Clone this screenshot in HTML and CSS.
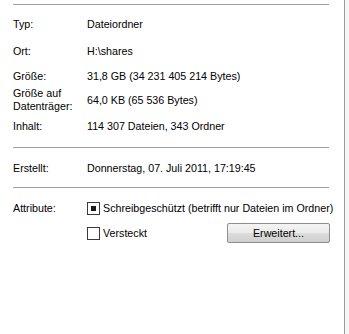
FILE: index.html
```html
<!DOCTYPE html>
<html lang="de">
<head>
<meta charset="utf-8">
<link rel="stylesheet" href="styles.css">
</head>
<body>
<div class="panel">
  <div class="sep sep-top"></div>
  <div class="row r-typ"><div class="label">Typ:</div><div class="value">Dateiordner</div></div>
  <div class="row r-ort"><div class="label">Ort:</div><div class="value">H:\shares</div></div>
  <div class="row r-size"><div class="label">Größe:</div><div class="value">31,8 GB (34 231 405 214 Bytes)</div></div>
  <div class="row r-disk"><div class="label">Größe auf<br>Datenträger:</div><div class="value mid">64,0 KB (65 536 Bytes)</div></div>
  <div class="row r-inh"><div class="label">Inhalt:</div><div class="value">114 307 Dateien, 343 Ordner</div></div>
  <div class="sep sep-2"></div>
  <div class="row r-erst"><div class="label">Erstellt:</div><div class="value">Donnerstag, 07. Juli 2011, 17:19:45</div></div>
  <div class="sep sep-3"></div>
  <div class="row r-attr">
    <div class="label">Attribute:</div>
    <div class="value check"><span class="box indet"></span><span>Schreibgeschützt (betrifft nur Dateien im Ordner)</span></div>
  </div>
  <div class="row r-hid">
    <div class="label"></div>
    <div class="value check grow"><span class="box"></span><span>Versteckt</span><button class="btn">Erweitert...</button></div>
  </div>
</div>
</body>
</html>
```
FILE: styles.css
```css
html, body {
  margin: 0;
  padding: 0;
}
body {
  background: #f6f6f6;
  font-family: "Liberation Sans", Arial, sans-serif;
  font-size: 10.7px;
  line-height: 13px;
  color: #000;
  width: 349px;
  height: 334px;
  overflow: hidden;
}
.panel {
  width: 345px;
  height: 334px;
  box-sizing: border-box;
  background: #fff;
  border-right: 1px solid #9a9a9a;
  padding: 4px 14px 0 13px;
  display: flex;
  flex-direction: column;
}
.sep {
  height: 1px;
  background: #a0a0a0;
  flex: none;
  margin-right: 1px;
}
.row {
  display: flex;
  align-items: flex-start;
}
.label {
  width: 74px;
  flex: none;
}
.value {
  flex: 1;
  white-space: nowrap;
}
.value.mid {
  align-self: center;
}
.r-typ { margin-top: 13px; }
.r-ort { margin-top: 14px; }
.r-size { margin-top: 12px; }
.r-disk { margin-top: 4px; }
.r-inh { margin-top: 7px; }
.sep-2 { margin-top: 14px; }
.r-erst { margin-top: 14px; }
.sep-3 { margin-top: 12px; }
.r-attr { margin-top: 14px; }
.r-hid { margin-top: 8px; align-items: center; }
.check {
  display: flex;
  align-items: center;
}
.box {
  width: 13px;
  height: 13px;
  box-sizing: border-box;
  border: 1px solid #3a3a3a;
  background: #fff;
  margin-right: 3px;
  position: relative;
  flex: none;
}
.box.indet::after {
  content: "";
  position: absolute;
  left: 3px;
  top: 3px;
  width: 5px;
  height: 5px;
  background: #1a1a1a;
}
.btn {
  margin-left: auto;
  width: 103px;
  height: 20px;
  box-sizing: border-box;
  border: 1px solid #8e8e8e;
  border-radius: 2px;
  background: linear-gradient(#f4f4f4, #ebebeb 50%, #dddddd 51%, #cfcfcf);
  font-family: "Liberation Sans", Arial, sans-serif;
  font-size: 10.7px;
  color: #000;
  padding: 0;
}
```
